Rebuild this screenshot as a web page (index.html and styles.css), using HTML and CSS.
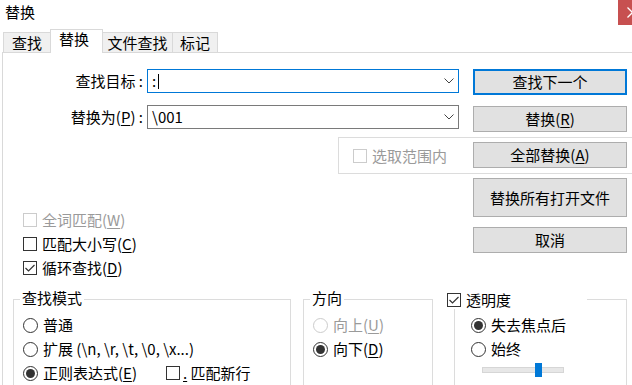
FILE: index.html
```html
<!DOCTYPE html>
<html lang="zh-CN">
<head>
<meta charset="utf-8">
<title>替换</title>
<link rel="stylesheet" href="styles.css">
</head>
<body>
<div class="window">
  <div class="titlebar">
    <span class="title">替换</span>
    <div class="close"><svg width="30" height="25" viewBox="0 0 30 25"><path d="M9.5 7.5 L19.5 17.5 M19.5 7.5 L9.5 17.5" stroke="#fff" stroke-width="1.3" fill="none"/></svg></div>
  </div>
  <div class="tabs">
    <div class="tab t1">查找</div>
    <div class="tab t2 active">替换</div>
    <div class="tab t3">文件查找</div>
    <div class="tab t4">标记</div>
  </div>
  <div class="panel">
    <div class="top">
      <div class="left">
        <div class="field-row">
          <span class="field-label">查找目标 :</span>
          <div class="combo focus"><span class="value">:</span><span class="caret"></span><svg class="chev" width="10" height="6" viewBox="0 0 10 6"><path d="M0.5 0.5 L5 5 L9.5 0.5" stroke="#444" stroke-width="1" fill="none"/></svg></div>
        </div>
        <div class="field-row row2">
          <span class="field-label">替换为(<u>P</u>) :</span>
          <div class="combo"><span class="value">\001</span><svg class="chev" width="10" height="6" viewBox="0 0 10 6"><path d="M0.5 0.5 L5 5 L9.5 0.5" stroke="#444" stroke-width="1" fill="none"/></svg></div>
        </div>
        <div class="scope-box">
          <span class="check disabled"></span><span class="opt-text disabled-text">选取范围内</span>
        </div>
        <div class="options">
          <div class="opt"><span class="check disabled"></span><span class="opt-text disabled-text">全词匹配(<u>W</u>)</span></div>
          <div class="opt"><span class="check"></span><span class="opt-text">匹配大小写(<u>C</u>)</span></div>
          <div class="opt"><span class="check"><svg width="12" height="12" viewBox="0 0 12 12"><path d="M1.5 6 L4.5 9 L10.5 3" stroke="#333" stroke-width="1.2" fill="none"/></svg></span><span class="opt-text">循环查找(<u>D</u>)</span></div>
        </div>
      </div>
      <div class="buttons">
        <button class="btn default">查找下一个</button>
        <button class="btn b2">替换(<u>R</u>)</button>
        <button class="btn b3">全部替换(<u>A</u>)</button>
        <button class="btn b4">替换所有打开文件</button>
        <button class="btn b5">取消</button>
      </div>
    </div>
    <div class="groups">
      <div class="group g-mode">
        <div class="legend">查找模式</div>
        <div class="radios">
          <div class="radio-row"><span class="radio"></span><span>普通</span></div>
          <div class="radio-row"><span class="radio"></span><span>扩展 (\n, \r, \t, \0, \x...)</span></div>
          <div class="radio-row"><span class="radio on"></span><span class="regex-label">正则表达式(<u>E</u>)</span><span class="check"></span><span class="newline-text"><u>.</u> 匹配新行</span></div>
        </div>
      </div>
      <div class="group g-dir">
        <div class="legend">方向</div>
        <div class="radios">
          <div class="radio-row"><span class="radio disabled"></span><span class="disabled-text">向上(<u>U</u>)</span></div>
          <div class="radio-row"><span class="radio on"></span><span>向下(<u>D</u>)</span></div>
        </div>
      </div>
      <div class="group g-trans">
        <div class="legend check-legend"><span class="check"><svg width="12" height="12" viewBox="0 0 12 12"><path d="M1.5 6 L4.5 9 L10.5 3" stroke="#333" stroke-width="1.2" fill="none"/></svg></span><span class="opt-text">透明度</span></div>
        <div class="radios trans-radios">
          <div class="radio-row"><span class="radio on"></span><span>失去焦点后</span></div>
          <div class="radio-row"><span class="radio"></span><span>始终</span></div>
        </div>
        <div class="track"><div class="thumb"></div></div>
      </div>
    </div>
  </div>
</div>
</body>
</html>
```

FILE: styles.css
```css
* { box-sizing: border-box; }
html, body { margin: 0; padding: 0; }
body {
  width: 632px;
  height: 385px;
  overflow: hidden;
  background: #fff;
  color: #000;
  font-family: "Noto Sans CJK SC", "Noto Sans", sans-serif;
  font-size: 15px;
  line-height: 18px;
}
u { text-decoration: underline; text-underline-offset: 2px; text-decoration-thickness: 1px; }

.window { width: 632px; height: 385px; overflow: hidden; }

.titlebar {
  height: 29px;
  display: flex;
  justify-content: space-between;
  align-items: flex-start;
}
.title { padding-left: 5px; line-height: 23px; }
.close {
  width: 30px;
  height: 25px;
  background: #c75050;
  margin-right: -16px;
  flex-shrink: 0;
}
.close svg { display: block; }

.tabs {
  display: flex;
  align-items: flex-end;
  height: 23px;
  padding-left: 3px;
  position: relative;
  z-index: 1;
}
.tab {
  height: 20px;
  border: 1px solid #d9d9d9;
  border-bottom: none;
  background: #f0f0f0;
  display: flex;
  align-items: center;
  justify-content: center;
  margin-left: -1px;
  flex-shrink: 0;
}
.t1 { width: 48px; margin-left: 0; }
.t2 { width: 53px; }
.t3 { width: 71px; }
.t4 { width: 46px; }
.tab.active {
  height: 24px;
  margin-bottom: -1px;
  background: #fff;
  padding-bottom: 5px;
  padding-right: 5px;
  position: relative;
  z-index: 2;
}

.panel {
  margin-left: 2px;
  width: 660px;
  height: 360px;
  border: 1px solid #d9d9d9;
}

.top { display: flex; padding-top: 16px; }
.left { width: 470px; flex-shrink: 0; }

.field-row { display: flex; align-items: center; height: 24px; }
.row2 { margin-top: 12px; }
.field-label {
  width: 144px;
  padding-right: 4px;
  text-align: right;
  white-space: nowrap;
  flex-shrink: 0;
}
.combo {
  width: 312px;
  height: 24px;
  border: 1px solid #7a7a7a;
  background: #fff;
  display: flex;
  align-items: center;
  padding-left: 4px;
  flex-shrink: 0;
}
.combo.focus { border-color: #0078d7; }
.caret { width: 1px; height: 15px; background: #000; margin-left: 2px; }
.chev { margin-left: auto; margin-right: 4px; display: block; }

.scope-box {
  margin-top: 8px;
  margin-left: 335px;
  width: 330px;
  height: 37px;
  border: 1px solid #dcdcdc;
  display: flex;
  align-items: center;
  padding-left: 14px;
}

.check {
  width: 14px;
  height: 14px;
  border: 1px solid #333;
  background: #fff;
  flex-shrink: 0;
  display: inline-flex;
  align-items: center;
  justify-content: center;
}
.check.disabled { border-color: #cccccc; }
.check svg { display: block; }
.opt-text { margin-left: 5px; white-space: nowrap; }
.disabled-text { color: #9a9a9a; }

.options { margin-top: 34px; }
.opt { display: flex; align-items: center; height: 24px; padding-left: 20px; }

.buttons { width: 154px; display: flex; flex-direction: column; flex-shrink: 0; }
.btn {
  font: inherit;
  color: #000;
  background: #e1e1e1;
  border: 1px solid #adadad;
  height: 26px;
  padding: 0;
  margin: 0;
  line-height: 18px;
}
.btn.default { border: 2px solid #0078d7; }
.b2 { margin-top: 11px; }
.b3 { margin-top: 10px; }
.b4 { margin-top: 10px; height: 39px; }
.b5 { margin-top: 10px; }

.groups { display: flex; margin-top: 19px; }
.group {
  border: 1px solid #dcdcdc;
  height: 120px;
  flex-shrink: 0;
}
.g-mode { margin-left: 10px; width: 278px; }
.g-dir { margin-left: 12px; width: 130px; }
.g-trans { margin-left: 21px; width: 173px; }

.legend {
  width: fit-content;
  margin-top: -11px;
  margin-left: 6px;
  padding: 0 2px;
  background: #fff;
  line-height: 18px;
  height: 18px;
}
.check-legend {
  display: flex;
  align-items: center;
  width: 140px;
  margin-top: -9px;
  margin-left: -8px;
  padding: 0;
}

.radios { padding-top: 6px; }
.trans-radios { padding-top: 4px; padding-left: 7px; }
.radio-row { display: flex; align-items: center; height: 24px; padding-left: 9px; white-space: nowrap; }
.radio {
  width: 15px;
  height: 15px;
  border: 1px solid #333;
  border-radius: 50%;
  background: #fff;
  margin-right: 5px;
  flex-shrink: 0;
  display: flex;
  align-items: center;
  justify-content: center;
}
.radio.disabled { border-color: #cccccc; }
.radio.on::after {
  content: "";
  width: 9px;
  height: 9px;
  border-radius: 50%;
  background: #333;
}
.regex-label { width: 123px; flex-shrink: 0; }
.newline-text { margin-left: 3px; }

.track {
  margin-top: 6px;
  margin-left: 27px;
  width: 82px;
  height: 6px;
  border: 1px solid #d6d6d6;
  background: #e7e7e7;
}
.thumb {
  margin-top: -5px;
  margin-left: 52px;
  width: 7px;
  height: 14px;
  background: #0078d7;
}
```
